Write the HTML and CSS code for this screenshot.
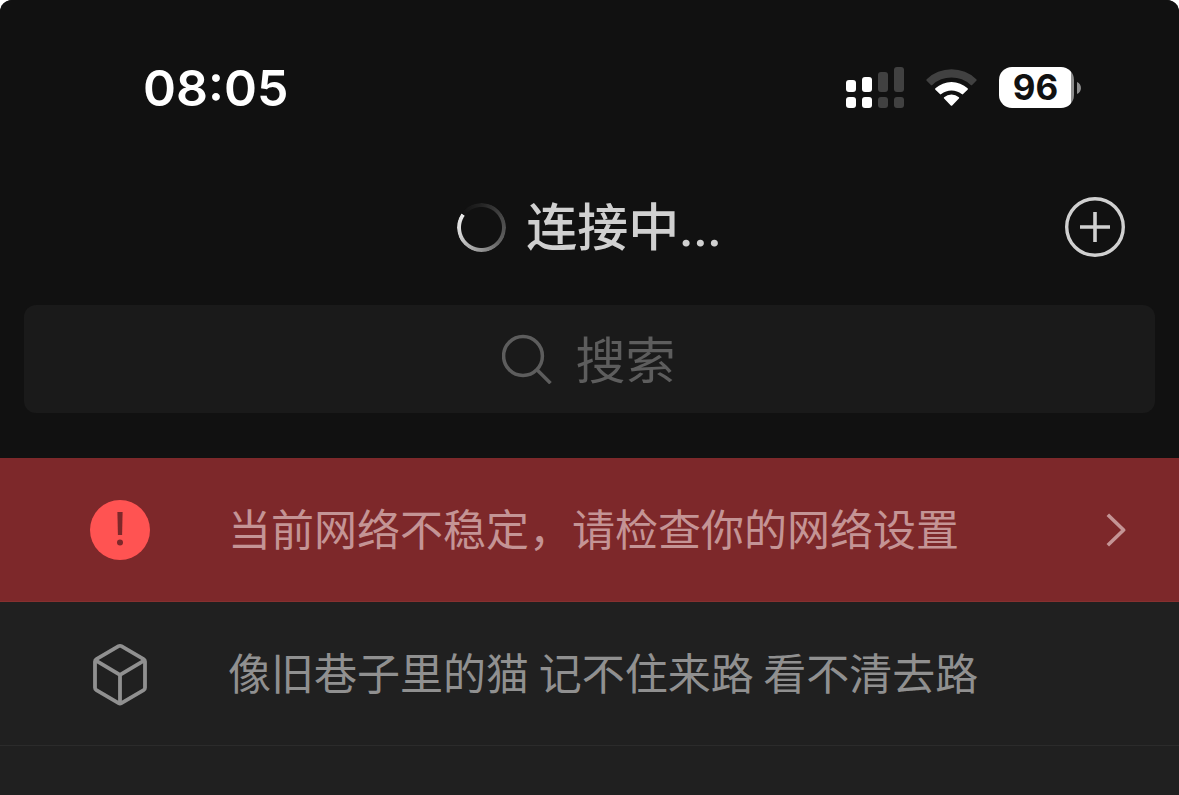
FILE: index.html
```
<!DOCTYPE html>
<html lang="zh-CN">
<head>
    <meta charset="UTF-8">
    <meta name="viewport" content="width=device-width, initial-scale=1.0">
    <title>连接中...</title>
    <link rel="stylesheet" href="styles.css">
</head>
<body>
    <div class="screen">
        <header class="top">
            <div class="status-bar">
                <time class="clock">08:05</time>
                <div class="status-icons">
                    <svg class="signal" width="58" height="42" viewBox="0 0 58 42" fill="#fff" aria-hidden="true">
                        <rect x="0" y="13" width="10" height="12" rx="3"/>
                        <rect x="16" y="10" width="10" height="15" rx="3"/>
                        <rect x="0" y="30" width="10" height="11" rx="3"/>
                        <rect x="16" y="30" width="10" height="11" rx="3"/>
                        <g fill="#414141">
                            <rect x="32" y="5" width="10" height="20" rx="3"/>
                            <rect x="48" y="0" width="10" height="25" rx="3"/>
                            <rect x="32" y="30" width="10" height="11" rx="3"/>
                            <rect x="48" y="30" width="10" height="11" rx="3"/>
                        </g>
                    </svg>
                    <svg class="wifi" width="51" height="38" viewBox="0.5 0 51 38" aria-hidden="true">
                        <path fill="#414141" d="M1.2 11.8 Q0.4 11 1.2 10.2 A36 36 0 0 1 50.8 10.2 Q51.6 11 50.8 11.8 L46.6 16 Q45.9 16.6 45.2 16 A28 28 0 0 0 6.8 16 Q6.1 16.6 5.4 16 Z"/>
                        <path fill="#fff" d="M9.9 20.7 Q9.2 20 9.9 19.3 A24 24 0 0 1 42.1 19.3 Q42.8 20 42.1 20.7 L37.6 25.1 Q36.9 25.8 36.2 25.1 A16 16 0 0 0 15.8 25.1 Q15.1 25.8 14.4 25.1 Z"/>
                        <path fill="#fff" d="M18.6 29.6 Q17.9 28.9 18.6 28.2 A11.4 11.4 0 0 1 33.4 28.2 Q34.1 28.9 33.4 29.6 L26.7 36.5 Q26 37.2 25.3 36.5 Z"/>
                    </svg>
                    <div class="battery">
                        <span class="battery-level">96</span>
                        <svg width="4" height="12" viewBox="0 0 4 12" fill="#8e8e8e" aria-hidden="true">
                            <path d="M0 0 C5.3 2.2 5.3 9.8 0 12 Z"/>
                        </svg>
                    </div>
                </div>
            </div>

            <div class="nav">
                <div class="nav-title">
                    <div class="spinner"></div>
                    <h1>连接中...</h1>
                </div>
                <button class="add" type="button" aria-label="添加">
                    <svg width="60" height="60" viewBox="0 0 60 60" fill="none" stroke="currentColor" aria-hidden="true">
                        <circle cx="30" cy="30" r="28.3" stroke-width="3.4"/>
                        <path d="M30 15 V45 M15 30 H45" stroke-width="3.6"/>
                    </svg>
                </button>
            </div>

            <label class="search">
                <svg width="50" height="50" viewBox="0 0 50 50" fill="none" stroke="currentColor" stroke-width="3.5" aria-hidden="true">
                    <circle cx="21" cy="22" r="19.4"/>
                    <path d="M34.5 35.2 L48.5 49.2"/>
                </svg>
                <input type="text" placeholder="搜索" aria-label="搜索">
            </label>
        </header>

        <main>
            <a class="row warning" href="#network">
                <svg class="row-icon" width="60" height="60" viewBox="0 0 60 60" aria-hidden="true">
                    <circle cx="30" cy="30" r="30" fill="#ff5352"/>
                    <path d="M27.4 12 H32.6 L32.1 35 H27.9 Z" fill="#7d282a"/>
                    <circle cx="30" cy="42.5" r="3" fill="#7d282a"/>
                </svg>
                <span class="row-text">当前网络不稳定，请检查你的网络设置</span>
                <svg class="chevron" width="20" height="34" viewBox="0 0 20 34" fill="none" stroke="currentColor" stroke-width="3.6" stroke-linejoin="round" aria-hidden="true">
                    <path d="M1.8 1.8 L17.6 17 L1.8 32.2"/>
                </svg>
            </a>
            <a class="row" href="#box">
                <svg class="row-icon" width="60" height="64" viewBox="0 0 60 64" fill="none" stroke="currentColor" stroke-width="3.8" stroke-linejoin="round" aria-hidden="true">
                    <path d="M28.6 4.2 Q30 3.4 31.4 4.2 L53.6 17.2 Q55 18 55 19.6 V45.8 Q55 47.4 53.6 48.2 L31.4 61.2 Q30 62 28.6 61.2 L6.4 48.2 Q5 47.4 5 45.8 V19.6 Q5 18 6.4 17.2 Z"/>
                    <path d="M5.6 18.4 L30 32.8 L54.4 18.4 M30 32.8 V61"/>
                </svg>
                <span class="row-text">像旧巷子里的猫 记不住来路 看不清去路</span>
            </a>
        </main>
    </div>
</body>
</html>
```
FILE: styles.css
```
* {
    margin: 0;
    padding: 0;
    box-sizing: border-box;
}

body {
    font-family: "Noto Sans CJK SC", sans-serif;
    background-color: #fff;
}

.screen {
    min-height: 100vh;
    background-color: #202020;
    border-radius: 12px 12px 0 0;
    overflow: hidden;
}

.top {
    background-color: #111;
    padding-bottom: 45px;
}

.status-bar {
    display: flex;
    justify-content: space-between;
    align-items: center;
    height: 175px;
    padding: 0 98px 0 143px;
    color: #fff;
}

.clock {
    font-family: Inter, sans-serif;
    font-size: 50px;
    font-weight: 600;
    line-height: 60px;
}

.status-icons {
    display: flex;
    align-items: center;
    gap: 22px;
}

.battery {
    display: flex;
    align-items: center;
    gap: 3px;
}

.battery-level {
    width: 75px;
    height: 41px;
    padding-right: 2px;
    border-radius: 13px;
    background: linear-gradient(to right, #fff 72px, #8e8e8e 72px);
    color: #111;
    font-family: Inter, sans-serif;
    font-size: 35px;
    font-weight: 700;
    line-height: 41px;
    text-align: center;
}

.nav {
    display: grid;
    grid-template-columns: 1fr auto 1fr;
    align-items: center;
    height: 104px;
    padding: 0 54px;
    color: #d0d0d0;
}

.nav-title {
    grid-column: 2;
    display: flex;
    align-items: center;
    gap: 20px;
}

.nav-title h1 {
    padding-top: 4px;
    font-family: Roboto, "Noto Sans CJK SC", sans-serif;
    font-size: 51px;
    font-weight: 500;
    line-height: 60px;
}

.spinner {
    width: 49px;
    height: 49px;
    border-radius: 50%;
    background: conic-gradient(from -54deg, #111 0deg, #222 50deg, #484848 120deg, #606060 180deg, #999 240deg, #ddd 320deg, #e8e8e8 358deg, #111 360deg);
    mask: radial-gradient(circle, transparent 20px, #000 21px);
}

.add {
    justify-self: end;
    width: 60px;
    height: 60px;
    border: none;
    background: none;
    color: inherit;
    cursor: pointer;
}

.search {
    display: flex;
    justify-content: center;
    align-items: center;
    gap: 24px;
    height: 108px;
    margin: 26px 24px 0;
    border-radius: 12px;
    background-color: #1a1a1a;
    color: #5d5d5d;
}

.search input {
    width: 102px;
    padding-bottom: 4px;
    border: none;
    outline: none;
    background: none;
    color: #d0d0d0;
    font-family: inherit;
    font-size: 50px;
    line-height: 72px;
}

.search input::placeholder {
    color: #5d5d5d;
}

.row {
    display: flex;
    align-items: center;
    gap: 78px;
    height: 144px;
    padding: 0 53px 0 90px;
    border-bottom: 1px solid #2b2b2b;
    color: #909090;
    text-decoration: none;
}

.row.warning {
    background-color: #7d282a;
    border-bottom-color: #86302f;
    color: #c49495;
}

.row-icon {
    flex-shrink: 0;
}

.row-text {
    flex: 1;
    padding-bottom: 6px;
    font-size: 43px;
    line-height: 60px;
}
```
